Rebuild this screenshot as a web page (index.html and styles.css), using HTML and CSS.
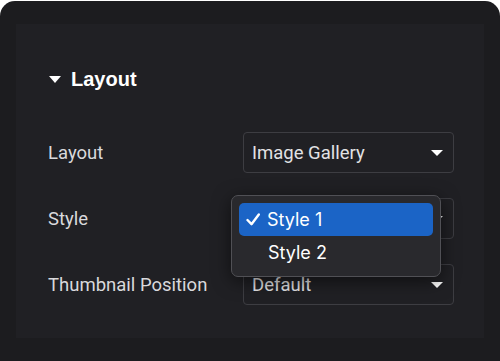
FILE: index.html
```html
<!DOCTYPE html>
<html lang="en">
<head>
    <meta charset="UTF-8">
    <meta name="viewport" content="width=device-width, initial-scale=1.0">
    <title>Layout settings</title>
    <link rel="stylesheet" href="styles.css">
</head>
<body>
    <div class="card">
        <section class="panel">
            <h2 class="panel-title"><span class="caret-down"></span>Layout</h2>

            <div class="field">
                <label>Layout</label>
                <div class="select">
                    <span>Image Gallery</span>
                    <span class="arrow"></span>
                </div>
            </div>

            <div class="field">
                <label>Style</label>
                <div class="select is-open">
                    <span class="value"></span>
                    <span class="arrow"></span>
                    <ul class="menu">
                        <li class="menu-item active">
                            <svg class="check" width="14" height="13" viewBox="0 0 14 13"><polyline points="1.5,7 5.5,11.2 12.8,1.5" fill="none" stroke="#ffffff" stroke-width="2.4" stroke-linecap="round" stroke-linejoin="round"/></svg>
                            Style 1
                        </li>
                        <li class="menu-item">Style 2</li>
                    </ul>
                </div>
            </div>

            <div class="field">
                <label>Thumbnail Position</label>
                <div class="select">
                    <span>Default</span>
                    <span class="arrow"></span>
                </div>
            </div>
        </section>
    </div>
</body>
</html>
```

FILE: styles.css
```css
body {
    margin: 0;
    background-color: #ffffff;
    font-family: Roboto, "Liberation Sans", sans-serif;
}

.card {
    margin-top: 1px;
    height: 360px;
    box-sizing: border-box;
    padding: 23px 16px 0;
    background-color: #1c1c1f;
    border-radius: 15px 15px 0 0;
}

.panel {
    height: 314px;
    box-sizing: border-box;
    padding: 44px 30px 0 32px;
    background-color: #202024;
}

.panel-title {
    display: flex;
    align-items: center;
    margin: 0 0 42px;
    height: 22px;
    font-family: "Liberation Sans", Arial, sans-serif;
    font-size: 20px;
    font-weight: bold;
    color: #ffffff;
}

.caret-down {
    width: 0;
    height: 0;
    margin: 1px 10px 0 1px;
    border-left: 6px solid transparent;
    border-right: 6px solid transparent;
    border-top: 7px solid #ffffff;
}

.field {
    display: grid;
    grid-template-columns: 195px 211px;
    align-items: center;
    margin-bottom: 25px;
}

.field label {
    font-size: 18.5px;
    color: #d9d9dc;
}

.select {
    position: relative;
    display: flex;
    align-items: center;
    justify-content: space-between;
    height: 41px;
    box-sizing: border-box;
    padding: 0 10px 0 8px;
    border: 1px solid #3d3d42;
    border-radius: 4px;
    font-size: 18.5px;
    color: #e2e2e4;
}

.arrow {
    width: 0;
    height: 0;
    margin-top: 1px;
    border-left: 6px solid transparent;
    border-right: 6px solid transparent;
    border-top: 6px solid #ffffff;
}

.menu {
    position: absolute;
    top: -4px;
    left: -13px;
    z-index: 2;
    width: 210px;
    height: 82px;
    box-sizing: border-box;
    margin: 0;
    padding: 7px 7px 0;
    list-style: none;
    background-color: #29292d;
    border: 1px solid #505055;
    border-radius: 7px;
    box-shadow: 0 4px 18px rgba(0, 0, 0, 0.55);
    font-family: Inter, Roboto, sans-serif;
    font-size: 18px;
    color: #ffffff;
}

.menu-item {
    display: flex;
    align-items: center;
    height: 33px;
    padding-left: 29px;
    border-radius: 5px;
}

.menu-item.active {
    padding-left: 7px;
    background-color: #1b64c6;
}

.check {
    margin-right: 7px;
}
```
